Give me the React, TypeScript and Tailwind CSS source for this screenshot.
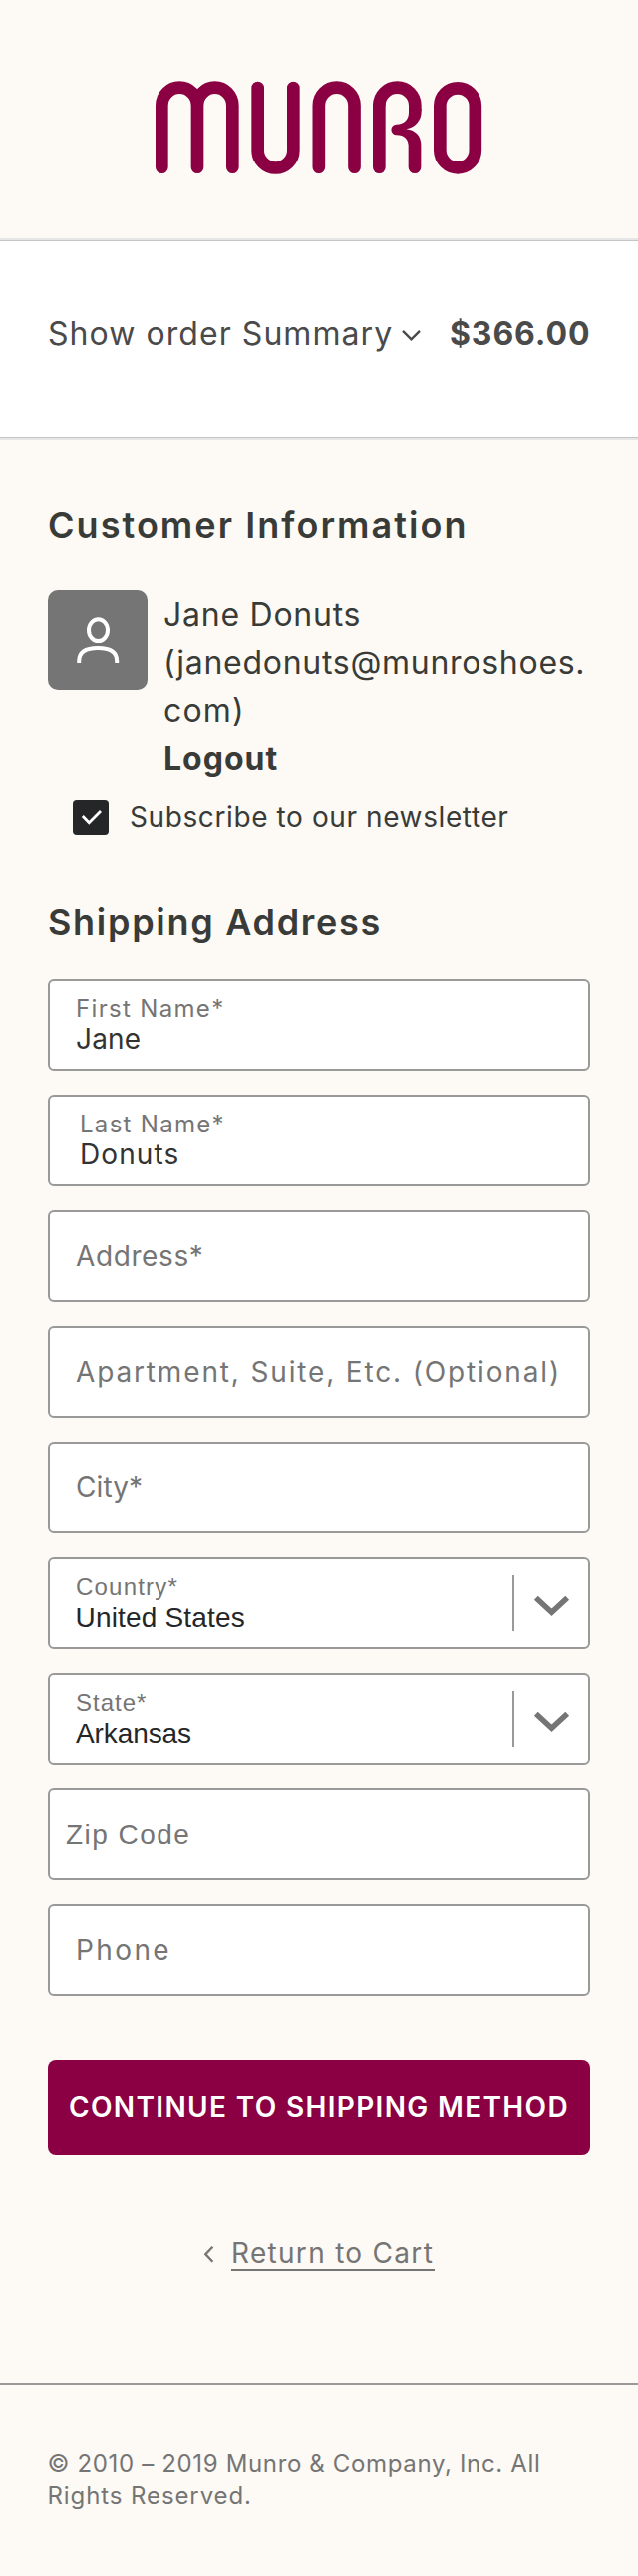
import type { ReactNode } from "react";

function Logo() {
  return (
    <svg width="360" height="140" viewBox="0 0 1080 420" role="img" aria-label="Munro">
      <g fill="none" stroke="#8a0043" strokeWidth="38" strokeLinecap="round">
        <path d="M67 323V137a53.5 54 0 0 1 107 0V323M174 137a53 54 0 0 1 106 0V323" />
        <path d="M356 84V272a53.5 53.5 0 0 0 107 0V84" />
        <path d="M539.5 323V137a53.5 54 0 0 1 107 0V323" />
        <path d="M721 323V137" />
        <path strokeLinecap="butt" d="M721 139V137a54 54 0 0 1 108 0V152" />
        <rect x="904" y="85" width="106.5" height="240" rx="53.25" />
      </g>
      <path
        fill="#8a0043"
        d="M848 148V156C848 182 830 203 802 208C832 212 847 230 847 257V323a19 19 0 0 1-38 0V257C808 238 797 225.500 773 225.500a15.750 15.750 0 0 1 0-31.500C797 194 810 178 810 158V148Z"
      />
    </svg>
  );
}

function Box({ className, children }: { className: string; children: ReactNode }) {
  return (
    <div className={`h-[92px] rounded-[6px] border-2 border-[#999999] bg-white whitespace-nowrap ${className}`}>
      {children}
    </div>
  );
}

function Select({ label, value, labelClass, valueClass }: { label: string; value: string; labelClass: string; valueClass: string }) {
  return (
    <Box className="flex justify-between font-['Liberation_Sans',sans-serif]">
      <div className="pt-3">
        <div className={`text-[24px] leading-[31px] text-[#757575] ${labelClass}`}>{label}</div>
        <div className={`text-[28px] leading-[31px] text-[#242628] ${valueClass}`}>{value}</div>
      </div>
      <div className="mt-4 mr-[17px] flex h-14 items-start border-l-2 border-[#999999] pl-[19px]">
        <svg className="mt-[19px]" width="38" height="24" viewBox="0 0 38 24" fill="none" stroke="#757575" strokeWidth="5.600">
          <path d="M2.800 3.800L18.500 18.200L34.200 3.800" />
        </svg>
      </div>
    </Box>
  );
}

export default function App() {
  return (
    <div className="flex min-h-[2584px] w-full flex-col bg-[#fdf9f4] font-['Inter',sans-serif] text-[#393b38]">
      <header className="flex h-[239px] justify-center pt-[60px]">
        <Logo />
      </header>

      <section className="h-[202px] border-y-2 border-[#e6e6e6] bg-white">
        <div className="flex h-full border-y border-[#c4c4c4] pt-[69px] pl-12 text-[32px] leading-[48px] whitespace-nowrap text-[#4a4a4a]">
          <span className="w-[354px] tracking-[1.05px]">Show order Summary</span>
          <svg className="mt-[19px] mr-[28px] shrink-0" width="21" height="13" viewBox="0 0 21 13" fill="none" stroke="#4a4a4a" strokeWidth="2.400">
            <path d="M2 1.800L10.500 10.300L19 1.800" />
          </svg>
          <span className="font-bold tracking-[0.9px]">$366.00</span>
        </div>
      </section>

      <main className="px-12 pt-[62px]">
        <h2 className="text-[36px] leading-[48px] font-semibold tracking-[2.05px]">Customer Information</h2>

        <div className="mt-[41px] flex">
          <div className="h-[100px] w-[100px] shrink-0 rounded-[10px] bg-[#757575]">
            <svg width="100" height="100" viewBox="0 0 100 100" fill="none" stroke="#fff" strokeWidth="4">
              <ellipse cx="50.500" cy="40.200" rx="9.500" ry="10.900" />
              <path d="M31.200 73V71C31.200 61.500 39 58 50.200 58S69.200 61.500 69.200 71V73" />
            </svg>
          </div>
          <div className="-mb-px pt-px pl-4 text-[32px] leading-[48px] whitespace-nowrap">
            <div className="tracking-[0.75px]">Jane Donuts</div>
            <div className="tracking-[0.72px]">
              (janedonuts@munroshoes.
              <br />
              <span className="tracking-[1.2px]">com)</span>
            </div>
            <div className="font-bold tracking-[1px]">Logout</div>
          </div>
        </div>

        <label className="mt-[18px] flex h-9 items-center pl-[25px]">
          <span className="h-9 w-9 rounded-[4px] bg-[#242628]">
            <svg width="36" height="36" viewBox="0 0 36 36" fill="none" stroke="#fff" strokeWidth="2.800">
              <path d="M9.800 17L16.300 23.800L28 12" />
            </svg>
          </span>
          <span className="pl-[21px] text-[28px] leading-9 tracking-[0.6px] whitespace-nowrap">Subscribe to our newsletter</span>
        </label>

        <h2 className="mt-[63px] text-[36px] leading-[48px] font-semibold tracking-[1.7px]">Shipping Address</h2>

        <div className="mt-[33px] flex flex-col gap-6">
          <Box className="pt-3 pl-[26px]">
            <div className="text-[24px] leading-[31px] tracking-[1.33px] text-[#757575]">First Name*</div>
            <div className="text-[28px] leading-[30px] tracking-[0.2px] text-[#333333]">Jane</div>
          </Box>
          <Box className="pt-3 pl-[30px]">
            <div className="text-[24px] leading-[31px] tracking-[1.3px] text-[#757575]">Last Name*</div>
            <div className="text-[28px] leading-[30px] tracking-[1.1px] text-[#333333]">Donuts</div>
          </Box>
          <Box className="flex items-center pl-[26px] text-[28px] tracking-[0.6px] text-[#757575]">Address*</Box>
          <Box className="flex items-center pl-[26px] text-[28px] tracking-[1.85px] text-[#757575]">
            Apartment, Suite, Etc. (Optional)
          </Box>
          <Box className="flex items-center pl-[26px] text-[28px] tracking-[0.1px] text-[#757575]">City*</Box>
          <Select label="Country*" value="United States" labelClass="pl-[26px] tracking-[1.2px]" valueClass="pl-[25.5px] tracking-[0.18px]" />
          <Select label="State*" value="Arkansas" labelClass="pl-[26px] tracking-[0.99px]" valueClass="pl-[26px] tracking-[-0.1px]" />
          <Box className="flex items-center pt-px pl-[16px] font-['Liberation_Sans',sans-serif] text-[28px] tracking-[1.45px] text-[#757575]">
            Zip Code
          </Box>
          <Box className="flex items-center pl-[26px] text-[28px] tracking-[2.4px] text-[#757575]">Phone</Box>
        </div>

        <button className="mt-16 flex h-24 w-full items-center rounded-[8px] bg-[#8a0043] pl-[21px] text-[28px] font-semibold tracking-[1.35px] whitespace-nowrap text-white">
          CONTINUE TO SHIPPING METHOD
        </button>

        <div className="mt-[82px] flex pl-[156px] text-[#757575]">
          <svg className="mt-[8px] shrink-0" width="12" height="19" viewBox="0 0 12 19" fill="none" stroke="#757575" strokeWidth="2.400">
            <path d="M9.400 1.800L2.300 9.300L9.400 16.800" />
          </svg>
          <a className="ml-4 w-[204px] border-b-2 border-[#757575] text-[28px] leading-8 tracking-[1.3px] whitespace-nowrap">
            Return to Cart
          </a>
        </div>
      </main>

      <footer className="mt-[112px] border-t-2 border-[#999999] pt-16 pl-[47.5px] text-[24px] leading-8 tracking-[0.65px] whitespace-nowrap text-[#757575]">
        © 2010 – 2019 Munro &amp; Company, Inc. All
        <br />
        <span className="tracking-[0.9px]">Rights Reserved.</span>
      </footer>
    </div>
  );
}
